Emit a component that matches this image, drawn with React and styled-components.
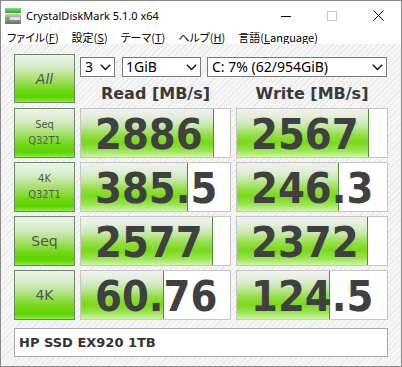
import React from "react";
import styled, { createGlobalStyle } from "styled-components";

const Global = createGlobalStyle`
  html, body { margin: 0; padding: 0; background: #ffffff; }
  * { box-sizing: border-box; }
`;

const Window = styled.div`
  width: 402px;
  height: 367px;
  border: 1px solid #8a8a8a;
  display: flex;
  flex-direction: column;
  background: #ffffff;
  overflow: hidden;
`;

const TitleBar = styled.div`
  height: 29px;
  display: flex;
  align-items: center;
  background: #ffffff;
  padding-left: 3px;
`;

const AppIcon = styled.svg`
  width: 18px;
  height: 16px;
  margin-top: 1px;
`;

const Title = styled.div`
  margin-left: 4px;
  font-family: "Segoe UI", "Noto Sans", sans-serif;
  font-size: 11px;
  color: #000000;
  flex: 1;
`;

const Controls = styled.div`
  display: flex;
  height: 100%;
`;

const CtrlBtn = styled.div`
  width: 46px;
  height: 100%;
  display: flex;
  align-items: center;
  justify-content: center;
`;

const MenuBar = styled.div`
  height: 14px;
  display: flex;
  align-items: center;
  gap: 13px;
  padding-left: 6px;
  background: #ffffff;
  font-family: "Noto Sans CJK JP", "Noto Sans", sans-serif;
  font-size: 11px;
  font-feature-settings: "palt";
  color: #000000;
  line-height: 14px;
`;

const MenuItem = styled.span`
  white-space: nowrap;
  u { text-decoration: underline; text-underline-offset: 1px; }
`;

const Main = styled.div`
  flex: 1;
  padding: 10px 13px 0 13px;
  background: repeating-linear-gradient(-45deg, #f6f6f6 0 3px, #e9e9e9 3px 4px);
  display: flex;
  flex-direction: column;
`;

const TopRow = styled.div`
  display: grid;
  grid-template-columns: 61px 151px 152px;
  column-gap: 5px;
  height: 49px;
  margin-bottom: 5px;
`;

const RightTop = styled.div`
  grid-column: 2 / span 2;
  display: grid;
  grid-template-columns: 151px 152px;
  grid-template-rows: 20px 19px;
  column-gap: 5px;
  row-gap: 7px;
  padding-top: 3px;
`;

const Combos = styled.div`
  grid-column: 1 / span 2;
  display: flex;
`;

const Combo = styled.div`
  width: ${(p) => p.$w}px;
  margin-right: ${(p) => p.$mr || 0}px;
  height: 20px;
  border: 1px solid #7a7a7a;
  background: #ffffff;
  display: flex;
  align-items: center;
  justify-content: space-between;
  padding: 0 3px 0 ${(p) => p.$pl || 3}px;
  font-family: "Segoe UI", "Noto Sans", sans-serif;
  font-size: 14px;
  color: #000000;
  line-height: 18px;
`;

const Header = styled.div`
  text-align: center;
  font-family: "DejaVu Sans", Verdana, sans-serif;
  font-weight: bold;
  font-size: 16px;
  line-height: 19px;
  color: #3a3a3a;
  white-space: nowrap;
`;

const LabelBtn = styled.div`
  height: ${(p) => p.$h}px;
  border: 1px solid #6f8a6a;
  background: linear-gradient(
    to bottom,
    #eef3ea 0%,
    #d6ecc8 25%,
    #a8e070 50%,
    #70d614 75%,
    #5ad400 90%,
    #8ee84a 100%
  );
  display: flex;
  flex-direction: column;
  align-items: center;
  justify-content: center;
  color: #555555;
  text-align: center;
`;

const BigLabel = styled.span`
  font-family: "DejaVu Sans", Verdana, sans-serif;
  font-size: 14px;
  font-style: ${(p) => (p.$italic ? "italic" : "normal")};
  line-height: 16px;
`;

const SmallLabel = styled.span`
  font-family: "DejaVu Sans Condensed", "DejaVu Sans", sans-serif;
  font-size: 11px;
  line-height: 16px;
`;

const ResultRow = styled.div`
  display: grid;
  grid-template-columns: 61px 151px 152px;
  column-gap: 5px;
  height: 50px;
  margin-bottom: 4px;
`;

const ValueBox = styled.div`
  position: relative;
  height: 50px;
  border: 1px solid #c6c6c6;
  background: #ffffff;
  display: flex;
  align-items: center;
  padding: 3px 0 0 ${(p) => p.$pl}px;
  overflow: hidden;
`;

const Meter = styled.div`
  position: absolute;
  left: 0;
  top: 0;
  bottom: 0;
  border-right: 1px solid #4f8f32;
  background: linear-gradient(
    to bottom,
    #f0f2ee 0%,
    #e4efdd 15%,
    #c4e8a6 35%,
    #92de40 55%,
    #7ad81c 70%,
    #98e44e 86%,
    #cdf5a8 100%
  );
`;

const Value = styled.span`
  position: relative;
  font-family: "DejaVu Sans Condensed", "DejaVu Sans", sans-serif;
  font-weight: bold;
  font-size: 43px;
  line-height: 43px;
  color: #404040;
  white-space: nowrap;
`;

const DriveBox = styled.div`
  margin-top: 4px;
  height: 29px;
  width: 374px;
  border: 1px solid #a8a8a8;
  background: #ffffff;
  display: flex;
  align-items: center;
  padding-left: 4px;
  font-family: "DejaVu Sans", Verdana, sans-serif;
  font-weight: bold;
  font-size: 13px;
  color: #333333;
`;

const Chevron = () => (
  <svg width="11" height="7" viewBox="0 0 11 7">
    <path d="M0.8 0.8 L5.5 5.6 L10.2 0.8" fill="none" stroke="#111" strokeWidth="1.4" />
  </svg>
);

const rows = [
  { l1: "Seq", l2: "Q32T1", read: "2886", rf: 133, write: "2567", wf: 132 },
  { l1: "4K", l2: "Q32T1", read: "385.5", rf: 107, write: "246.3", wf: 102 },
  { l1: "Seq", read: "2577", rf: 132, write: "2372", wf: 131 },
  { l1: "4K", read: "60.76", rf: 83, write: "124.5", wf: 93 },
];

export default function App() {
  return (
    <>
      <Global />
      <Window>
        <TitleBar>
          <AppIcon viewBox="0 0 18 16">
            <defs>
              <linearGradient id="gb" x1="0" y1="0" x2="0" y2="1">
                <stop offset="0" stopColor="#7fe07f" />
                <stop offset="1" stopColor="#2aa82a" />
              </linearGradient>
              <linearGradient id="db" x1="0" y1="0" x2="0" y2="1">
                <stop offset="0" stopColor="#c8c8c8" />
                <stop offset="1" stopColor="#6a6a6a" />
              </linearGradient>
            </defs>
            <rect x="1" y="0" width="16" height="5" fill="url(#gb)" />
            <rect x="1" y="6" width="16" height="10" rx="1" fill="url(#db)" />
            <rect x="6" y="9" width="10" height="3" fill="#e2e2e2" />
            <rect x="2.5" y="9" width="2.5" height="3" fill="#3ccc3c" />
          </AppIcon>
          <Title>CrystalDiskMark 5.1.0 x64</Title>
          <Controls>
            <CtrlBtn>
              <svg width="10" height="10" viewBox="0 0 10 10">
                <line x1="0" y1="5.5" x2="10" y2="5.5" stroke="#000" strokeWidth="1" />
              </svg>
            </CtrlBtn>
            <CtrlBtn>
              <svg width="10" height="10" viewBox="0 0 10 10">
                <rect x="0.5" y="0.5" width="9" height="9" fill="none" stroke="#c4c4c4" strokeWidth="1" />
              </svg>
            </CtrlBtn>
            <CtrlBtn>
              <svg width="11" height="11" viewBox="0 0 11 11">
                <path d="M0.5 0.5 L10.5 10.5 M10.5 0.5 L0.5 10.5" stroke="#000" strokeWidth="1" />
              </svg>
            </CtrlBtn>
          </Controls>
        </TitleBar>
        <MenuBar>
          <MenuItem>ファイル(<u>F</u>)</MenuItem>
          <MenuItem>設定(<u>S</u>)</MenuItem>
          <MenuItem>テーマ(<u>T</u>)</MenuItem>
          <MenuItem>ヘルプ(<u>H</u>)</MenuItem>
          <MenuItem>言語(<u>L</u>anguage)</MenuItem>
        </MenuBar>
        <Main>
          <TopRow>
            <LabelBtn $h={49}>
              <BigLabel $italic>All</BigLabel>
            </LabelBtn>
            <RightTop>
              <Combos>
                <Combo $w={35} $mr={7} $pl={4}>
                  <span>3</span>
                  <Chevron />
                </Combo>
                <Combo $w={79} $mr={6}>
                  <span>1GiB</span>
                  <Chevron />
                </Combo>
                <Combo $w={180} $pl={4}>
                  <span>C: 7% (62/954GiB)</span>
                  <Chevron />
                </Combo>
              </Combos>
              <Header>Read [MB/s]</Header>
              <Header>Write [MB/s]</Header>
            </RightTop>
          </TopRow>
          {rows.map((r, i) => (
            <ResultRow key={i}>
              <LabelBtn $h={50}>
                {r.l2 ? (
                  <>
                    <SmallLabel>{r.l1}</SmallLabel>
                    <SmallLabel>{r.l2}</SmallLabel>
                  </>
                ) : (
                  <BigLabel>{r.l1}</BigLabel>
                )}
              </LabelBtn>
              <ValueBox $pl={14}>
                <Meter style={{ width: `${r.rf}px` }} />
                <Value>{r.read}</Value>
              </ValueBox>
              <ValueBox $pl={14}>
                <Meter style={{ width: `${r.wf}px` }} />
                <Value>{r.write}</Value>
              </ValueBox>
            </ResultRow>
          ))}
          <DriveBox>HP SSD EX920 1TB</DriveBox>
        </Main>
      </Window>
    </>
  );
}
